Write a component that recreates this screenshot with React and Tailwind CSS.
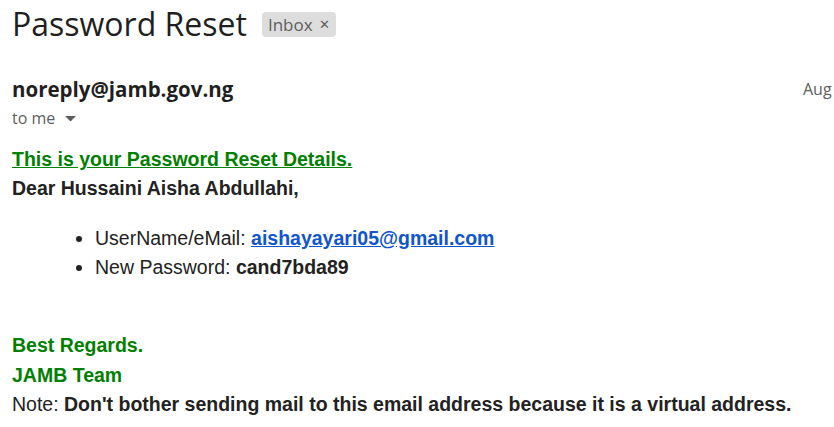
export default function App() {
  return (
    <div className="w-[834px] h-[427px] overflow-hidden bg-white relative">
      <div className="flex items-center pl-[12px] pt-[7px] h-[40px]">
        <h1 className="text-[32px] leading-none text-[#1f1f1f]" style={{ fontFamily: '"Open Sans", sans-serif' }}>Password Reset</h1>
        <span className="ml-[15px] mt-[2px] flex items-center h-[25px] px-[6px] rounded-[4px] bg-[#dddddd] text-[#5e5e5e] text-[17px]" style={{ fontFamily: '"Open Sans", sans-serif' }}>
          Inbox <span className="ml-[6px] text-[13px]">✕</span>
        </span>
      </div>
      <div className="flex justify-between items-start pl-[12px] pt-[36px]">
        <div className="text-[20.5px] font-bold text-[#1f1f1f] leading-[26px]" style={{ fontFamily: '"Open Sans", sans-serif' }}>noreply@jamb.gov.ng</div>
        <div className="text-[16px] text-[#5e5e5e] leading-[26px] w-[31px] whitespace-nowrap" style={{ fontFamily: '"Open Sans", sans-serif' }}>Aug</div>
      </div>
      <div className="flex items-center pl-[12px] mt-[4px] text-[16px] text-[#5e5e5e]" style={{ fontFamily: '"Open Sans", sans-serif' }}>
        to me
        <svg width="11" height="6" viewBox="0 0 11 6" className="ml-[10px] mt-[1px]"><path d="M0 0 L11 0 L5.5 5.5 Z" fill="#5e5e5e" /></svg>
      </div>
      <div className="pl-[12px] pt-[15px] text-[19.5px] text-[#222]" style={{ fontFamily: '"Liberation Sans", Arial, sans-serif' }}>
        <div className="font-bold text-[#008000] underline leading-[29px]">This is your Password Reset Details.</div>
        <div className="font-bold leading-[29px]">Dear Hussaini Aisha Abdullahi,</div>
        <ul className="list-disc pl-[83px] mt-[21px] leading-[29px]">
          <li>UserName/eMail: <a className="font-bold text-[#1155cc] underline">aishayayari05@gmail.com</a></li>
          <li>New Password: <b>cand7bda89</b></li>
        </ul>
        <div className="mt-[49px] leading-[29.5px]">
          <div className="font-bold text-[#008000]">Best Regards.</div>
          <div className="font-bold text-[#008000]">JAMB Team</div>
          <div>Note: <b>Don't bother sending mail to this email address because it is a virtual address.</b></div>
        </div>
      </div>
    </div>
  );
}
